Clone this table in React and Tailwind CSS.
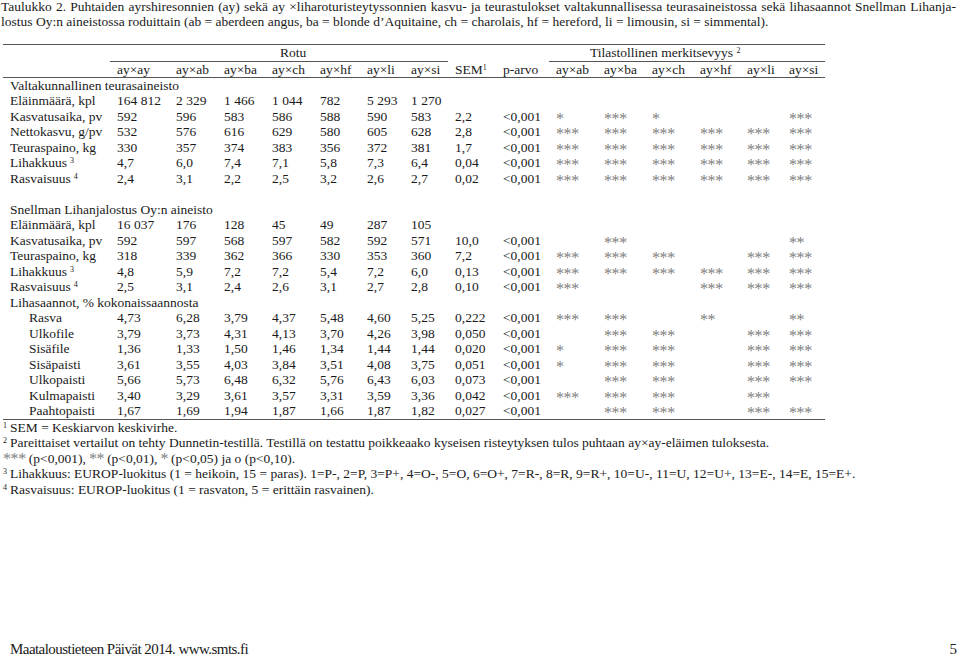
import React from 'react';

const cols = 'grid grid-cols-[107px_59px_48px_48px_48px_47px_44px_44px_48px_53px_48px_48px_48px_47px_42px_43px]';

const breeds = ['ay×ay', 'ay×ab', 'ay×ba', 'ay×ch', 'ay×hf', 'ay×li', 'ay×si'];

// taulukon rivit
const national = [
    { label: 'Eläinmäärä, kpl', vals: ['164 812', '2 329', '1 466', '1 044', '782', '5 293', '1 270'], sem: '', p: '', sig: ['', '', '', '', '', ''] },
    { label: 'Kasvatusaika, pv', vals: ['592', '596', '583', '586', '588', '590', '583'], sem: '2,2', p: '<0,001', sig: ['*', '***', '*', '', '', '***'] },
    { label: 'Nettokasvu, g/pv', vals: ['532', '576', '616', '629', '580', '605', '628'], sem: '2,8', p: '<0,001', sig: ['***', '***', '***', '***', '***', '***'] },
    { label: 'Teuraspaino, kg', vals: ['330', '357', '374', '383', '356', '372', '381'], sem: '1,7', p: '<0,001', sig: ['***', '***', '***', '***', '***', '***'] },
    { label: 'Lihakkuus', sup: '3', vals: ['4,7', '6,0', '7,4', '7,1', '5,8', '7,3', '6,4'], sem: '0,04', p: '<0,001', sig: ['***', '***', '***', '***', '***', '***'] },
    { label: 'Rasvaisuus', sup: '4', vals: ['2,4', '3,1', '2,2', '2,5', '3,2', '2,6', '2,7'], sem: '0,02', p: '<0,001', sig: ['***', '***', '***', '***', '***', '***'] },
];

const snellman = [
    { label: 'Eläinmäärä, kpl', vals: ['16 037', '176', '128', '45', '49', '287', '105'], sem: '', p: '', sig: ['', '', '', '', '', ''] },
    { label: 'Kasvatusaika, pv', vals: ['592', '597', '568', '597', '582', '592', '571'], sem: '10,0', p: '<0,001', sig: ['', '***', '', '', '', '**'] },
    { label: 'Teuraspaino, kg', vals: ['318', '339', '362', '366', '330', '353', '360'], sem: '7,2', p: '<0,001', sig: ['***', '***', '***', '', '***', '***'] },
    { label: 'Lihakkuus', sup: '3', vals: ['4,8', '5,9', '7,2', '7,2', '5,4', '7,2', '6,0'], sem: '0,13', p: '<0,001', sig: ['***', '***', '***', '***', '***', '***'] },
    { label: 'Rasvaisuus', sup: '4', vals: ['2,5', '3,1', '2,4', '2,6', '3,1', '2,7', '2,8'], sem: '0,10', p: '<0,001', sig: ['***', '', '', '***', '***', '***'] },
];

const cuts = [
    { label: 'Rasva', vals: ['4,73', '6,28', '3,79', '4,37', '5,48', '4,60', '5,25'], sem: '0,222', p: '<0,001', sig: ['***', '***', '', '**', '', '**'] },
    { label: 'Ulkofile', vals: ['3,79', '3,73', '4,31', '4,13', '3,70', '4,26', '3,98'], sem: '0,050', p: '<0,001', sig: ['', '***', '***', '', '***', '***'] },
    { label: 'Sisäfile', vals: ['1,36', '1,33', '1,50', '1,46', '1,34', '1,44', '1,44'], sem: '0,020', p: '<0,001', sig: ['*', '***', '***', '', '***', '***'] },
    { label: 'Sisäpaisti', vals: ['3,61', '3,55', '4,03', '3,84', '3,51', '4,08', '3,75'], sem: '0,051', p: '<0,001', sig: ['*', '***', '***', '', '***', '***'] },
    { label: 'Ulkopaisti', vals: ['5,66', '5,73', '6,48', '6,32', '5,76', '6,43', '6,03'], sem: '0,073', p: '<0,001', sig: ['', '***', '***', '', '***', '***'] },
    { label: 'Kulmapaisti', vals: ['3,40', '3,29', '3,61', '3,57', '3,31', '3,59', '3,36'], sem: '0,042', p: '<0,001', sig: ['***', '***', '***', '', '***', ''] },
    { label: 'Paahtopaisti', vals: ['1,67', '1,69', '1,94', '1,87', '1,66', '1,87', '1,82'], sem: '0,027', p: '<0,001', sig: ['', '***', '***', '', '***', '***'] },
];

function Stars({ s }) {
    return <span className="inline-block align-[-3px] text-[16px] leading-[11px] tracking-[-0.4px] text-[#808080]">{s}</span>;
}

function Sup({ n, className = '' }) {
    return <sup className={`text-[8px] leading-none ${className}`}>{n}</sup>;
}

function Row({ row, indent }) {
    return (
        <div className={`${cols} h-[15.5px]`}>
            <div className={indent ? 'pl-[26px]' : 'pl-[7px]'}>
                {row.label}
                {row.sup && <Sup n={row.sup} className="ml-[3px]" />}
            </div>
            {row.vals.map((v, i) => (
                <div key={i} className="pl-[7px]">{v}</div>
            ))}
            <div className="pl-[7px]">{row.sem}</div>
            <div className="pl-[7px]">{row.p}</div>
            {row.sig.map((s, i) => (
                <div key={i} className="pl-[7px]">{s && <Stars s={s} />}</div>
            ))}
        </div>
    );
}

function Section({ title }) {
    return (
        <div className="h-[15.5px] pl-[7px]">{title}</div>
    );
}

export default function App() {
    return (
        <div className="flex flex-col h-[658px] w-[960px] bg-white text-[#1a1a1a] font-['Liberation_Serif',serif] text-[13.5px] leading-[15.5px] whitespace-nowrap overflow-hidden">
            {/* otsikko */}
            <div className="pl-px w-[956px] leading-[14.5px]">
                <div className="text-justify [text-align-last:justify] whitespace-normal">
                    Taulukko 2. Puhtaiden ayrshiresonnien (ay) sekä ay ×liharoturisteytyssonnien kasvu- ja teurastulokset valtakunnallisessa teurasaineistossa sekä lihasaannot Snellman Lihanja-
                </div>
                <div>
                    lostus Oy:n aineistossa roduittain (ab = aberdeen angus, ba = blonde d’Aquitaine, ch = charolais, hf = hereford, li = limousin, si = simmental).
                </div>
            </div>

            {/* taulukko */}
            <div className="ml-[3px] w-[822px] mt-[15px] border-t border-[#555]">
                <div className={`${cols} h-[16.5px]`}>
                    <div />
                    <div className="col-span-7 border-b border-[#555] pl-[170px]">Rotu</div>
                    <div />
                    <div />
                    <div className="col-span-6 border-b border-[#555] pl-[41px]">
                        Tilastollinen merkitsevyys <Sup n="2" />
                    </div>
                </div>
                <div className={`${cols} h-[16px] border-b border-[#555]`}>
                    <div />
                    {breeds.map(b => (
                        <div key={b} className="pl-[7px]">{b}</div>
                    ))}
                    <div className="pl-[7px]">SEM<Sup n="1" /></div>
                    <div className="pl-[7px]">p-arvo</div>
                    {breeds.slice(1).map(b => (
                        <div key={b} className="pl-[7px]">{b}</div>
                    ))}
                </div>
                <Section title="Valtakunnallinen teurasaineisto" />
                {national.map(r => <Row key={r.label} row={r} />)}
                <div className="h-[15.5px]" />
                <Section title="Snellman Lihanjalostus Oy:n aineisto" />
                {snellman.map(r => <Row key={r.label} row={r} />)}
                <Section title="Lihasaannot, % kokonaissaannosta" />
                <div className="border-b border-[#555]">
                    {cuts.map(r => <Row key={r.label} row={r} indent />)}
                </div>
            </div>

            {/* alaviitteet */}
            <div className="pl-[3px] flex flex-col">
                <div className="h-[15.5px]"><Sup n="1" className="mr-[3px]" />SEM = Keskiarvon keskivirhe.</div>
                <div className="h-[15.5px]"><Sup n="2" className="mr-[3px]" />Pareittaiset vertailut on tehty Dunnetin-testillä. Testillä on testattu poikkeaako kyseisen risteytyksen tulos puhtaan ay×ay-eläimen tuloksesta.</div>
                <div className="h-[15.5px] flex items-center gap-[3px]">
                    <Stars s="***" /><span>(p&lt;0,001),</span>
                    <Stars s="**" /><span>(p&lt;0,01),</span>
                    <Stars s="*" /><span>(p&lt;0,05) ja o (p&lt;0,10).</span>
                </div>
                <div className="h-[15.5px]"><Sup n="3" className="mr-[3px]" />Lihakkuus: EUROP-luokitus (1 = heikoin, 15 = paras). 1=P-, 2=P, 3=P+, 4=O-, 5=O, 6=O+, 7=R-, 8=R, 9=R+, 10=U-, 11=U, 12=U+, 13=E-, 14=E, 15=E+.</div>
                <div className="h-[15.5px]"><Sup n="4" className="mr-[3px]" />Rasvaisuus: EUROP-luokitus (1 = rasvaton, 5 = erittäin rasvainen).</div>
            </div>

            {/* sivun alaosa */}
            <div className="mt-auto flex justify-between items-end pl-[10px] pr-[3px] pb-[1px] text-[15px] leading-[15px]">
                <span className="tracking-[-0.55px]">Maataloustieteen Päivät 2014. www.smts.fi</span>
                <span>5</span>
            </div>
        </div>
    );
}
